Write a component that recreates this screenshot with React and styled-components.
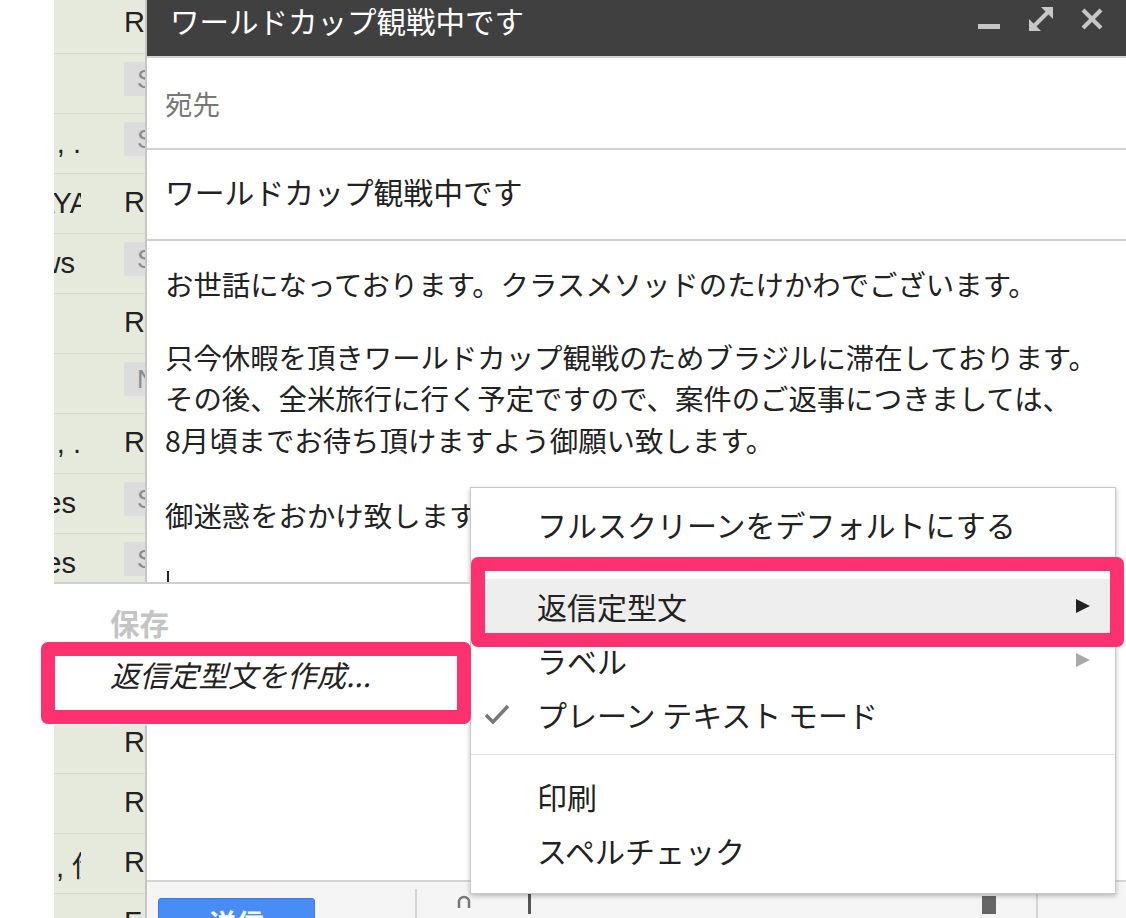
import React from "react";
import styled, { createGlobalStyle } from "styled-components";

const jp = `"Noto Sans CJK JP", "Liberation Sans", sans-serif`;
const latin = `"Liberation Sans", "Noto Sans CJK JP", sans-serif`;

const GlobalStyle = createGlobalStyle`
  html, body { margin: 0; padding: 0; background: #fff; }
  body { font-family: ${jp}; color: #222; }
  * { box-sizing: border-box; }
`;

const Page = styled.div`
  position: relative;
  display: flex;
  width: 1126px;
  height: 918px;
  overflow: hidden;
  background: #fff;
`;

const Gutter = styled.div`
  width: 54px;
  flex-shrink: 0;
`;

const Inbox = styled.div`
  width: 91px;
  flex-shrink: 0;
  overflow: hidden;
  background: #e5eadc;
`;

const Rows = styled.div`
  margin-top: -6px;
`;

const Row = styled.div`
  display: flex;
  align-items: center;
  height: 60px;
  border-bottom: 1px solid #d5dacd;
  font-family: ${latin};
  font-size: 29px;
  color: #222;
`;

const Sender = styled.div`
  width: 27px;
  flex-shrink: 0;
  display: flex;
  justify-content: flex-end;
  overflow: hidden;
  white-space: nowrap;
`;

const Name = styled.span`
  margin-right: ${(p) => p.$shift || 0}px;
`;

const Mark = styled.span`
  margin-left: 43px;
  margin-top: -3px;
`;

const Badge = styled.span`
  align-self: flex-start;
  margin: 8px 0 0 43px;
  height: 34px;
  padding: 0 8px 0 13px;
  background: #dcdcdc;
  color: #8a8a8a;
  font-size: 26px;
  line-height: 34px;
  border-radius: 2px;
`;

const Compose = styled.div`
  flex: 1;
  min-width: 0;
  display: flex;
  flex-direction: column;
  border-left: 2px solid #c6c6c6;
  background: #fff;
`;

const TitleBar = styled.div`
  flex-shrink: 0;
  height: 58px;
  display: flex;
  align-items: flex-start;
  padding: 0 23px 0 23px;
  background: #404040;
  border-bottom: 2px solid #d3d3d3;
`;

const Title = styled.div`
  color: #fff;
  font-size: 29.5px;
  line-height: 40px;
  white-space: nowrap;
`;

const WindowIcons = styled.div`
  margin-left: auto;
  margin-top: 7px;
  display: flex;
  gap: 28px;
  color: #c7c7c7;
`;

const Field = styled.div`
  flex-shrink: 0;
  height: ${(p) => p.$h}px;
  display: flex;
  align-items: center;
  padding: 0 18px ${(p) => p.$lift || 0}px;
  border-bottom: 2px solid #d0d0d0;
  font-size: ${(p) => (p.$muted ? 27.5 : 29.8)}px;
  color: ${(p) => (p.$muted ? "#777" : "#222")};
  white-space: nowrap;
`;

const Body = styled.div`
  flex: 1;
  padding: 22px 18px 0;
  font-size: 28.4px;
  line-height: 41.5px;
  color: #222;
  overflow: hidden;
`;

const Para = styled.p`
  margin: 0 0 ${(p) => p.$gap}px;
  white-space: nowrap;
`;

const Caret = styled.span`
  display: block;
  width: 2px;
  height: 28px;
  margin-left: 2px;
  background: #222;
`;

const Toolbar = styled.div`
  flex-shrink: 0;
  height: 38px;
  display: flex;
  align-items: flex-start;
  padding: 16px 0 0 11px;
  background: #f5f5f5;
  border-top: 2px solid #d5d5d5;
  overflow: hidden;
`;

const SendButton = styled.div`
  flex-shrink: 0;
  width: 157px;
  height: 50px;
  background: #4a8cf6;
  border: 1px solid #3b7ae6;
  border-radius: 3px;
  color: #fff;
  font-size: 27px;
  font-weight: bold;
  line-height: 48px;
  text-align: center;
`;

const ToolDivider = styled.div`
  flex-shrink: 0;
  width: 2px;
  height: 40px;
  margin: -9px 0 0 ${(p) => p.$ml}px;
  background: #d5d5d5;
`;

const ToolIcon = styled.svg`
  flex-shrink: 0;
  margin: -4px 0 0 ${(p) => p.$ml}px;
`;

const Menu = styled.div`
  position: absolute;
  left: 470px;
  top: 487px;
  width: 646px;
  padding: 9px 0 16px;
  background: #fff;
  border: 1px solid #c8c8c8;
  box-shadow: 0 2px 5px rgba(0, 0, 0, 0.25);
  font-size: 30px;
  color: #222;
`;

const MenuItem = styled.div`
  position: relative;
  display: grid;
  grid-template-columns: 66px 1fr auto;
  align-items: center;
  height: 54px;
  padding-right: 25px;
  background: ${(p) => (p.$active ? "#eeeeee" : "transparent")};
  white-space: nowrap;
`;

const CheckCell = styled.span`
  display: flex;
  padding-left: 13px;
  color: #777;
`;

const MenuSep = styled.div`
  height: 1px;
  margin: 13px 0 14px;
  background: #e3e3e3;
`;

const SubMenu = styled.div`
  position: absolute;
  left: 54px;
  top: 582px;
  width: 416px;
  height: 143px;
  padding: 12px 0 0 56px;
  background: #fff;
  border-top: 2px solid #cfcfcf;
  font-size: 29.5px;
  color: #222;
`;

const SubItem = styled.div`
  position: relative;
  height: 52px;
  line-height: 52px;
  white-space: nowrap;
  color: ${(p) => (p.$disabled ? "#c4c4c4" : "#222")};
  font-weight: ${(p) => (p.$disabled ? "bold" : "normal")};
  font-style: ${(p) => (p.$italic ? "italic" : "normal")};
`;

const Highlight = styled.div`
  position: absolute;
  inset: ${(p) => p.$inset};
  border: 14px solid #fd3170;
  border-radius: 7px;
  pointer-events: none;
  z-index: 2;
`;

const rows = [
  { mark: "R" },
  { badge: "S" },
  { name: ", .", badge: "S" },
  { name: "SAKAYA", shift: -8, mark: "R" },
  { name: "news", shift: 6, badge: "S" },
  { mark: "R" },
  { badge: "N" },
  { name: ", .", mark: "R" },
  { name: "Updates", shift: 5, badge: "S" },
  { name: "Updates", shift: 5, badge: "S" },
  { mark: "R" },
  { badge: "S" },
  { mark: "R" },
  { mark: "R" },
  { name: ", 伊", shift: -20, mark: "R" },
  { mark: "F" },
];

const Triangle = ({ color }) => (
  <svg width="14" height="14" viewBox="0 0 14 14">
    <polygon points="0,0 14,7 0,14" fill={color} />
  </svg>
);

export default function App() {
  return (
    <Page>
      <GlobalStyle />
      <Gutter />
      <Inbox>
        <Rows>
          {rows.map((r, i) => (
            <Row key={i}>
              <Sender>{r.name && <Name $shift={r.shift}>{r.name}</Name>}</Sender>
              {r.mark && <Mark>{r.mark}</Mark>}
              {r.badge && <Badge>{r.badge}</Badge>}
            </Row>
          ))}
        </Rows>
      </Inbox>

      <Compose>
        <TitleBar>
          <Title>ワールドカップ観戦中です</Title>
          <WindowIcons>
            <svg width="24" height="24" viewBox="0 0 24 24">
              <rect x="1" y="17" width="22" height="5" fill="currentColor" />
            </svg>
            <svg width="24" height="24" viewBox="0 0 24 24">
              <line x1="5" y1="19" x2="19" y2="5" stroke="currentColor" strokeWidth="4" />
              <polygon points="12,0 24,0 24,12" fill="currentColor" />
              <polygon points="0,12 0,24 12,24" fill="currentColor" />
            </svg>
            <svg width="22" height="24" viewBox="0 0 22 24">
              <line x1="2" y1="3" x2="20" y2="21" stroke="currentColor" strokeWidth="4" />
              <line x1="20" y1="3" x2="2" y2="21" stroke="currentColor" strokeWidth="4" />
            </svg>
          </WindowIcons>
        </TitleBar>

        <Field $h={92} $muted>宛先</Field>
        <Field $h={91} $lift={8}>ワールドカップ観戦中です</Field>

        <Body>
          <Para $gap={31}>お世話になっております。クラスメソッドのたけかわでございます。</Para>
          <Para $gap={34}>
            只今休暇を頂きワールドカップ観戦のためブラジルに滞在しております。
            <br />
            その後、全米旅行に行く予定ですので、案件のご返事につきましては、
            <br />
            8月頃までお待ち頂けますよう御願い致します。
          </Para>
          <Para $gap={35}>御迷惑をおかけ致しますが、何卒よろしくお願い申し上げます。</Para>
          <Caret />
        </Body>

        <Toolbar>
          <SendButton>送信</SendButton>
          <ToolDivider $ml={100} />
          <ToolIcon $ml={39} width="16" height="20" viewBox="0 0 16 20">
            <path d="M3 14 V8 a5 5 0 0 1 10 0 V14" fill="none" stroke="#777" strokeWidth="2.5" />
          </ToolIcon>
          <ToolIcon $ml={55} width="6" height="20" viewBox="0 0 6 20">
            <rect x="1" y="0" width="3" height="20" fill="#555" />
          </ToolIcon>
          <ToolIcon $ml={449} width="14" height="20" viewBox="0 0 14 20">
            <rect x="0" y="2" width="14" height="18" fill="#666" />
          </ToolIcon>
          <ToolDivider $ml={40} />
        </Toolbar>
      </Compose>

      <Menu>
        <MenuItem>
          <span />
          <span>フルスクリーンをデフォルトにする</span>
        </MenuItem>
        <MenuSep />
        <MenuItem $active>
          <Highlight $inset="-22px -9px -14px 0" />
          <span />
          <span>返信定型文</span>
          <Triangle color="#222" />
        </MenuItem>
        <MenuItem>
          <span />
          <span>ラベル</span>
          <Triangle color="#aaa" />
        </MenuItem>
        <MenuItem>
          <CheckCell>
            <svg width="26" height="22" viewBox="0 0 26 22">
              <polyline points="2,12 9,19 24,3" fill="none" stroke="currentColor" strokeWidth="3.5" />
            </svg>
          </CheckCell>
          <span>プレーン テキスト モード</span>
        </MenuItem>
        <MenuSep />
        <MenuItem>
          <span />
          <span>印刷</span>
        </MenuItem>
        <MenuItem>
          <span />
          <span>スペルチェック</span>
        </MenuItem>
      </Menu>

      <SubMenu>
        <SubItem $disabled>保存</SubItem>
        <SubItem $italic>
          <Highlight $inset="-6px -1px -24px -69px" />
          返信定型文を作成...
        </SubItem>
      </SubMenu>
    </Page>
  );
}
